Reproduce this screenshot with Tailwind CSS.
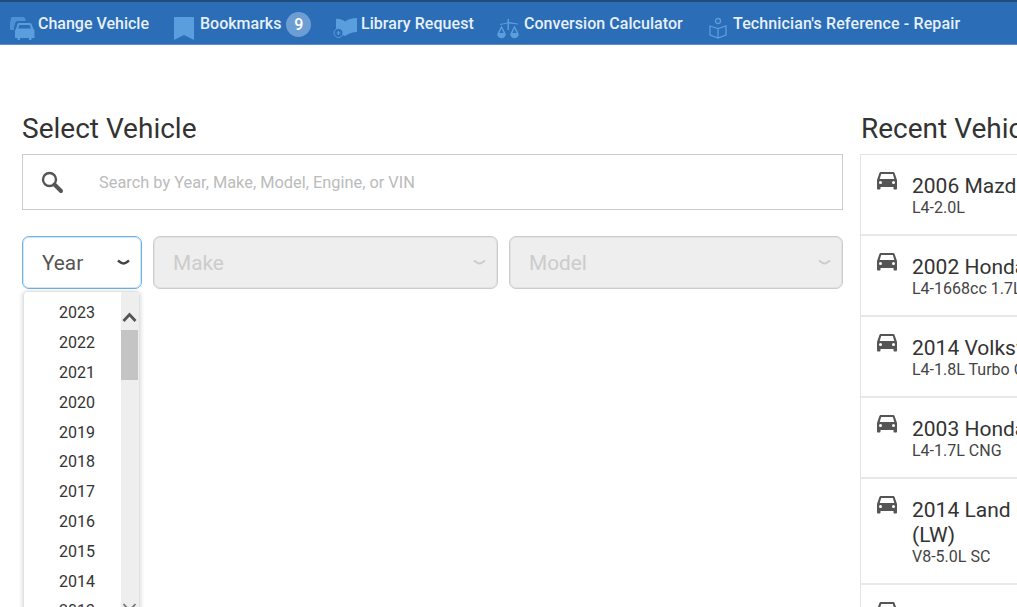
<!DOCTYPE html>
<html lang="en">
<head>
    <meta charset="UTF-8">
    <title>Select Vehicle</title>
    <script src="https://cdn.jsdelivr.net/npm/@tailwindcss/browser@4"></script>
</head>
<body class="bg-white overflow-hidden h-[607px] font-['Roboto',sans-serif] text-[#333]">
    <nav class="h-[45px] bg-[#2b6db6] border-t-2 border-t-[#1f4b7d] border-b border-b-[#5b8fcb] flex items-start pl-[9px] text-[#e6f0fa] text-[16px] font-medium whitespace-nowrap">
        <a class="flex items-start w-[163px] pt-[10px] gap-[3px]">
            <svg class="w-[26px] h-[26px] mt-[3px] text-[#5a9ede]" viewBox="0 0 26 26" fill="currentColor">
                <path d="M3 2h11c1 0 1.600.5 2 1.500L17 6H9c-1.500 0-2.300.7-2.800 2L5 12v3H2.500C1.500 15 1 14.500 1 13.500V8l1-4.500C2.200 2.600 2.500 2 3 2z" opacity=".75"/>
                <path fill-rule="evenodd" d="M10 8h11c.8 0 1.300.4 1.600 1.200L24.500 14c.7.4 1 1 1 1.800V23h-3v2h-2.500v-2H11v2H8.500v-2H6v-7.200c0-.8.400-1.400 1-1.800l1.500-4.800C8.800 8.400 9.200 8 10 8zm.3 2-1.200 3.500h12.800L20.700 10H10.300z"/>
            </svg>
            <span>Change Vehicle</span>
        </a>
        <a class="flex items-start w-[161px] pt-[10px] gap-[6px]">
            <svg class="w-[22px] h-[24px] mt-[4px] text-[#5a9ede]" viewBox="0 0 22 24" fill="currentColor"><path d="M2 1h20v23l-10-5-10 5z"/></svg>
            <span>Bookmarks</span>
            <span class="ml-[-1px] w-[25px] h-[25px] rounded-full bg-[#6d9ed3] text-white text-center leading-[25px] text-[16px]">9</span>
        </a>
        <a class="flex items-start w-[162px] pt-[10px] gap-[4px]">
            <svg class="w-[24px] h-[24px] mt-[5px] text-[#5a9ede]" viewBox="0 0 24 24" fill="currentColor">
                <path d="M3 2c3-.5 6 .5 9 2.500C15 2.500 19 1 24 1v14c-4 0-8 1.500-12 4-2-1-4-1.600-6-2H3z"/>
                <circle cx="5.500" cy="16" r="4.500" fill="#2b6db6" stroke="currentColor" stroke-width="1"/>
                <path d="M5.500 14v4M3.500 16h4" stroke="currentColor" stroke-width="1"/>
            </svg>
            <span class="tracking-[0.05px]">Library Request</span>
        </a>
        <a class="flex items-start w-[212px] pt-[10px] gap-[4px] pl-[1px]">
            <svg class="w-[24px] h-[24px] mt-[4px] text-[#5a9ede]" viewBox="0 0 24 24" fill="currentColor">
                <path d="M11.500 3h1.500v3l9 1.500v1L13 7.500V14h-1.500V7.500L4 9V8l7.500-1.500z"/>
                <path fill-rule="evenodd" d="M5.500 9.500 9.800 18a4.200 4.200 0 0 1-8.600 0zm0 3L3.500 17h4z"/>
                <path fill-rule="evenodd" d="M18.500 9.500 22.800 18a4.200 4.200 0 0 1-8.600 0zm0 3-2 4.500h4z"/>
            </svg>
            <span class="tracking-[0.05px]">Conversion Calculator</span>
        </a>
        <a class="flex items-start pt-[10px] gap-[6px] pl-[2px]">
            <svg class="w-[18px] h-[22px] mt-[5px] text-[#5a9ede]" viewBox="0 0 18 22" fill="none" stroke="currentColor" stroke-width="1.300">
                <circle cx="9" cy="4" r="2.500"/>
                <path d="M1 9l8 2.500L17 9v9l-8 3-8-3zM9 11.500V21"/>
            </svg>
            <span class="tracking-[0.13px]">Technician's Reference - Repair</span>
        </a>
    </nav>

    <main class="flex items-start pl-[22px] gap-[17px] pt-[65px]">
        <section class="w-[821px] shrink-0">
            <h1 class="text-[28px] leading-[38px] mb-[6px] text-[#333]">Select Vehicle</h1>
            <div class="h-[56px] border border-[#ccc] flex items-center pl-[17px]">
                <svg class="w-[24px] h-[24px] text-[#555]" viewBox="0 0 24 24" fill="none" stroke="currentColor">
                    <circle cx="9.500" cy="9.500" r="6.500" stroke-width="2.400"/>
                    <path d="M14.500 14.500 21 21" stroke-width="4" stroke-linecap="round"/>
                </svg>
                <span class="ml-[35px] mt-[2px] text-[16.360px] text-[#bbb]">Search by Year, Make, Model, Engine, or VIN</span>
            </div>
            <div class="flex gap-[11px] mt-[26px]">
                <div class="w-[120px] h-[53px] rounded-[7px] border border-[#6cb0ec] shadow-[inset_0_0_0_1px_#d4e8f8] flex items-center justify-between pl-[19px] pr-[11px] text-[20.800px] text-[#555]">
                    <span class="mt-[2px]">Year</span>
                    <svg class="w-[13px] h-[7px] text-[#444]" viewBox="0 0 13 7" fill="none" stroke="currentColor" stroke-width="2.400"><path d="M1 1.500c2 1.600 3.500 3 5.500 3s3.500-1.400 5.500-3"/></svg>
                </div>
                <div class="w-[345px] h-[53px] rounded-[7px] border border-[#ccc] bg-[#eee] shadow-[inset_0_0_0_1px_#e2e2e2] flex items-center justify-between pl-[19px] pr-[11px] text-[20.800px] text-[#ccc]">
                    <span class="mt-[2px]">Make</span>
                    <svg class="w-[13px] h-[7px] text-[#ccc]" viewBox="0 0 13 7" fill="none" stroke="currentColor" stroke-width="2"><path d="M1 1.500c2 1.600 3.500 3 5.500 3s3.500-1.400 5.500-3"/></svg>
                </div>
                <div class="w-[334px] h-[53px] rounded-[7px] border border-[#ccc] bg-[#eee] shadow-[inset_0_0_0_1px_#e2e2e2] flex items-center justify-between pl-[19px] pr-[11px] text-[20.800px] text-[#ccc]">
                    <span class="mt-[2px]">Model</span>
                    <svg class="w-[13px] h-[7px] text-[#ccc]" viewBox="0 0 13 7" fill="none" stroke="currentColor" stroke-width="2"><path d="M1 1.500c2 1.600 3.500 3 5.500 3s3.500-1.400 5.500-3"/></svg>
                </div>
            </div>
            <div class="relative ml-[1px] mt-[2px] w-[117px] h-[340px] rounded-t-[4px] border border-[#e2e2e2] shadow-[0_1px_5px_rgba(0,0,0,0.2)] flex overflow-hidden">
                <ul class="w-[97px] pt-[6.400px] pl-[35px] text-[16px] leading-[29.800px] text-[#333]">
                    <li>2023</li>
                    <li>2022</li>
                    <li>2021</li>
                    <li>2020</li>
                    <li>2019</li>
                    <li>2018</li>
                    <li>2017</li>
                    <li>2016</li>
                    <li>2015</li>
                    <li>2014</li>
                    <li>2013</li>
                </ul>
                <div class="w-[18px] bg-[#eee] relative">
                    <svg class="absolute top-[19px] left-[1px] w-[15px] h-[12px] text-[#555]" viewBox="0 0 15 12" fill="none" stroke="currentColor" stroke-width="2.800"><path d="M1.500 10 7.500 3.500l6 6.500"/></svg>
                    <div class="absolute top-[38px] left-0 w-[17px] h-[50px] bg-[#c4c4c4]"></div>
                    <svg class="absolute top-[310px] left-[1px] w-[15px] h-[12px] text-[#777]" viewBox="0 0 15 12" fill="none" stroke="currentColor" stroke-width="1.800"><path d="M1.500 2 7.500 8.500l6-6.500"/></svg>
                </div>
            </div>
        </section>

        <section class="w-[300px] shrink-0">
            <h2 class="text-[28px] leading-[38px] mb-[6px] ml-[1px] text-[#333]">Recent Vehicles</h2>
            <ul class="border-t border-l border-[#e4e4e4]">
                <li class="h-[81px] border-b-2 border-[#e8e8e8] flex pl-[16px] pt-[16px]">
                    <svg class="w-[20px] h-[19px] shrink-0 text-[#555]" viewBox="0 0 20 19" fill="currentColor"><path d="M4 1h12c.8 0 1.400.5 1.700 1.200L20 9v8.500c0 .5-.4 1-1 1h-1.500c-.6 0-1-.5-1-1V16h-13v1.500c0 .5-.4 1-1 1H1c-.6 0-1-.5-1-1V9l2.300-6.800C2.600 1.500 3.200 1 4 1zm.2 2-1.500 5h14.600l-1.500-5H4.200zM3.500 10a1.500 1.500 0 1 0 0 3 1.500 1.500 0 0 0 0-3zm13 0a1.500 1.500 0 1 0 0 3 1.500 1.500 0 0 0 0-3z"/></svg>
                    <div class="ml-[15px] pt-[3px]">
                        <div class="text-[21px] leading-[25px] whitespace-nowrap">2006 Mazda 3</div>
                        <div class="text-[16px] leading-[18px] text-[#444] whitespace-nowrap">L4-2.0L</div>
                    </div>
                </li>
                <li class="h-[81px] border-b-2 border-[#e8e8e8] flex pl-[16px] pt-[16px]">
                    <svg class="w-[20px] h-[19px] shrink-0 text-[#555]" viewBox="0 0 20 19" fill="currentColor"><path d="M4 1h12c.8 0 1.400.5 1.700 1.200L20 9v8.500c0 .5-.4 1-1 1h-1.500c-.6 0-1-.5-1-1V16h-13v1.500c0 .5-.4 1-1 1H1c-.6 0-1-.5-1-1V9l2.300-6.800C2.600 1.500 3.200 1 4 1zm.2 2-1.500 5h14.600l-1.500-5H4.200zM3.500 10a1.500 1.500 0 1 0 0 3 1.500 1.500 0 0 0 0-3zm13 0a1.500 1.500 0 1 0 0 3 1.500 1.500 0 0 0 0-3z"/></svg>
                    <div class="ml-[15px] pt-[3px]">
                        <div class="text-[21px] leading-[25px] whitespace-nowrap">2002 Honda Civic</div>
                        <div class="text-[16px] leading-[18px] text-[#444] whitespace-nowrap">L4-1668cc 1.7L</div>
                    </div>
                </li>
                <li class="h-[81px] border-b-2 border-[#e8e8e8] flex pl-[16px] pt-[16px]">
                    <svg class="w-[20px] h-[19px] shrink-0 text-[#555]" viewBox="0 0 20 19" fill="currentColor"><path d="M4 1h12c.8 0 1.400.5 1.700 1.200L20 9v8.500c0 .5-.4 1-1 1h-1.500c-.6 0-1-.5-1-1V16h-13v1.500c0 .5-.4 1-1 1H1c-.6 0-1-.5-1-1V9l2.300-6.800C2.600 1.500 3.200 1 4 1zm.2 2-1.500 5h14.600l-1.500-5H4.200zM3.500 10a1.500 1.500 0 1 0 0 3 1.500 1.500 0 0 0 0-3zm13 0a1.500 1.500 0 1 0 0 3 1.500 1.500 0 0 0 0-3z"/></svg>
                    <div class="ml-[15px] pt-[3px]">
                        <div class="text-[21px] leading-[25px] whitespace-nowrap">2014 Volkswagen</div>
                        <div class="text-[16px] leading-[18px] text-[#444] whitespace-nowrap">L4-1.8L Turbo CNG</div>
                    </div>
                </li>
                <li class="h-[81px] border-b-2 border-[#e8e8e8] flex pl-[16px] pt-[16px]">
                    <svg class="w-[20px] h-[19px] shrink-0 text-[#555]" viewBox="0 0 20 19" fill="currentColor"><path d="M4 1h12c.8 0 1.400.5 1.700 1.200L20 9v8.500c0 .5-.4 1-1 1h-1.500c-.6 0-1-.5-1-1V16h-13v1.500c0 .5-.4 1-1 1H1c-.6 0-1-.5-1-1V9l2.300-6.800C2.600 1.500 3.200 1 4 1zm.2 2-1.500 5h14.600l-1.500-5H4.200zM3.500 10a1.500 1.500 0 1 0 0 3 1.500 1.500 0 0 0 0-3zm13 0a1.500 1.500 0 1 0 0 3 1.500 1.500 0 0 0 0-3z"/></svg>
                    <div class="ml-[15px] pt-[3px]">
                        <div class="text-[21px] leading-[25px] whitespace-nowrap">2003 Honda Civic</div>
                        <div class="text-[16px] leading-[18px] text-[#444] whitespace-nowrap">L4-1.7L CNG</div>
                    </div>
                </li>
                <li class="h-[106px] border-b-2 border-[#e8e8e8] flex pl-[16px] pt-[16px]">
                    <svg class="w-[20px] h-[19px] shrink-0 text-[#555]" viewBox="0 0 20 19" fill="currentColor"><path d="M4 1h12c.8 0 1.400.5 1.700 1.200L20 9v8.500c0 .5-.4 1-1 1h-1.500c-.6 0-1-.5-1-1V16h-13v1.500c0 .5-.4 1-1 1H1c-.6 0-1-.5-1-1V9l2.300-6.800C2.600 1.500 3.200 1 4 1zm.2 2-1.500 5h14.600l-1.500-5H4.200zM3.500 10a1.500 1.500 0 1 0 0 3 1.500 1.500 0 0 0 0-3zm13 0a1.500 1.500 0 1 0 0 3 1.500 1.500 0 0 0 0-3z"/></svg>
                    <div class="ml-[15px] pt-[3px]">
                        <div class="text-[21px] leading-[25px] whitespace-nowrap">2014 Land Rover<br>(LW)</div>
                        <div class="text-[16px] leading-[18px] text-[#444] whitespace-nowrap">V8-5.0L SC</div>
                    </div>
                </li>
                <li class="h-[81px] flex pl-[16px] pt-[16px]">
                    <svg class="w-[20px] h-[19px] shrink-0 text-[#555]" viewBox="0 0 20 19" fill="currentColor"><path d="M4 1h12c.8 0 1.400.5 1.700 1.200L20 9v8.500c0 .5-.4 1-1 1h-1.500c-.6 0-1-.5-1-1V16h-13v1.500c0 .5-.4 1-1 1H1c-.6 0-1-.5-1-1V9l2.300-6.800C2.600 1.500 3.200 1 4 1zm.2 2-1.500 5h14.600l-1.500-5H4.200zM3.500 10a1.500 1.500 0 1 0 0 3 1.500 1.500 0 0 0 0-3zm13 0a1.500 1.500 0 1 0 0 3 1.500 1.500 0 0 0 0-3z"/></svg>
                </li>
            </ul>
        </section>
    </main>
</body>
</html>
